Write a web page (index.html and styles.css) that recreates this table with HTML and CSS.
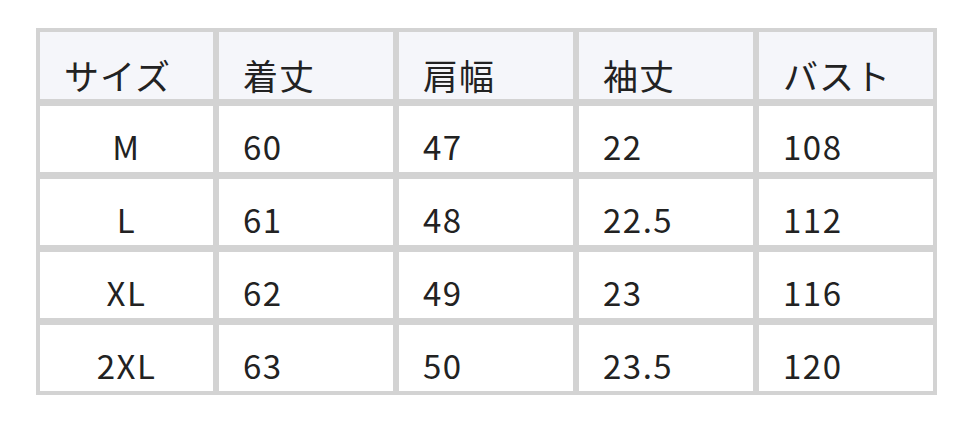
FILE: index.html
```html
<!DOCTYPE html>
<html lang="ja">
<head>
<meta charset="utf-8">
<title>サイズ表</title>
<link rel="stylesheet" href="styles.css">
</head>
<body>
<div class="size-table">
  <div class="cell head">サイズ</div>
  <div class="cell head">着丈</div>
  <div class="cell head">肩幅</div>
  <div class="cell head">袖丈</div>
  <div class="cell head">バスト</div>

  <div class="cell size">M</div>
  <div class="cell">60</div>
  <div class="cell">47</div>
  <div class="cell">22</div>
  <div class="cell">108</div>

  <div class="cell size">L</div>
  <div class="cell">61</div>
  <div class="cell">48</div>
  <div class="cell">22.5</div>
  <div class="cell">112</div>

  <div class="cell size">XL</div>
  <div class="cell">62</div>
  <div class="cell">49</div>
  <div class="cell">23</div>
  <div class="cell">116</div>

  <div class="cell size">2XL</div>
  <div class="cell">63</div>
  <div class="cell">50</div>
  <div class="cell">23.5</div>
  <div class="cell">120</div>
</div>
</body>
</html>
```

FILE: styles.css
```css
html, body {
  margin: 0;
  padding: 0;
  background: #ffffff;
}

body {
  padding: 28px 0 0 36px;
  font-family: "Noto Sans CJK JP", "Noto Sans", sans-serif;
  color: #222222;
}

.size-table {
  display: grid;
  width: max-content;
  grid-template-columns: 173px repeat(4, 174px);
  grid-template-rows: 67px repeat(4, 66px);
  column-gap: 6px;
  row-gap: 7px;
  padding: 4px;
  background: #d3d3d3;
}

.cell {
  display: flex;
  align-items: flex-end;
  padding: 0 0 9px 24px;
  background: #ffffff;
  font-size: 33px;
  letter-spacing: 1.5px;
  line-height: 1;
}

.cell.head {
  background: #f5f6fa;
  font-size: 35px;
  letter-spacing: 1px;
  padding-bottom: 7px;
}

.cell.size {
  justify-content: center;
  padding-left: 0;
}
```
